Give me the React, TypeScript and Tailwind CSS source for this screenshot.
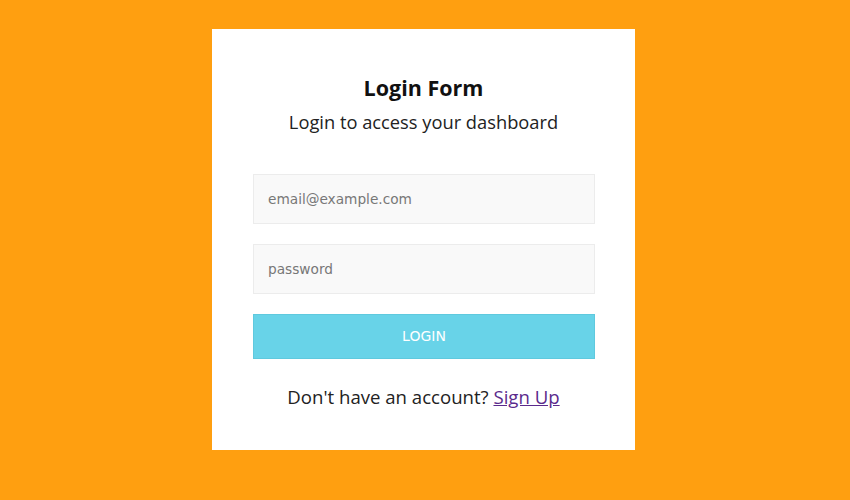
export default function App() {
  return (
    <div className="w-[850px] h-[500px] bg-[#ff9f10] pt-[29px] pr-[3px] flex justify-center font-['Open_Sans',sans-serif]">
      <div className="w-[423px] h-[421px] bg-white pt-[45px] flex flex-col items-center">
        <h1 className="text-[21.5px] leading-[28px] font-bold text-[#111]">Login Form</h1>
        <p className="mt-[7px] text-[18.3px] leading-[26px] text-[#222]">Login to access your dashboard</p>
        <form className="mt-[39px] w-[342px] ml-[1px] flex flex-col gap-[20px]">
          <input
            type="email"
            placeholder="email@example.com"
            className="h-[50px] w-full bg-[#f9f9f9] border border-[#ececec] px-[14px] text-[13.7px] font-['DejaVu_Sans',sans-serif] placeholder:text-[#777] outline-none"
          />
          <input
            type="password"
            placeholder="password"
            className="h-[50px] w-full bg-[#f9f9f9] border border-[#ececec] px-[14px] text-[13.7px] font-['DejaVu_Sans',sans-serif] placeholder:text-[#777] outline-none"
          />
          <button
            type="button"
            className="h-[45px] w-full bg-[#68d3e8] border border-[#5fc9de] text-white text-[14px] font-['DejaVu_Sans',sans-serif]"
          >
            LOGIN
          </button>
        </form>
        <p className="mt-[25px] text-[18.6px] leading-[26px] text-[#222]">
          Don't have an account?{" "}
          <a href="#" className="text-[#5b2a8c] underline">Sign Up</a>
        </p>
      </div>
    </div>
  );
}
